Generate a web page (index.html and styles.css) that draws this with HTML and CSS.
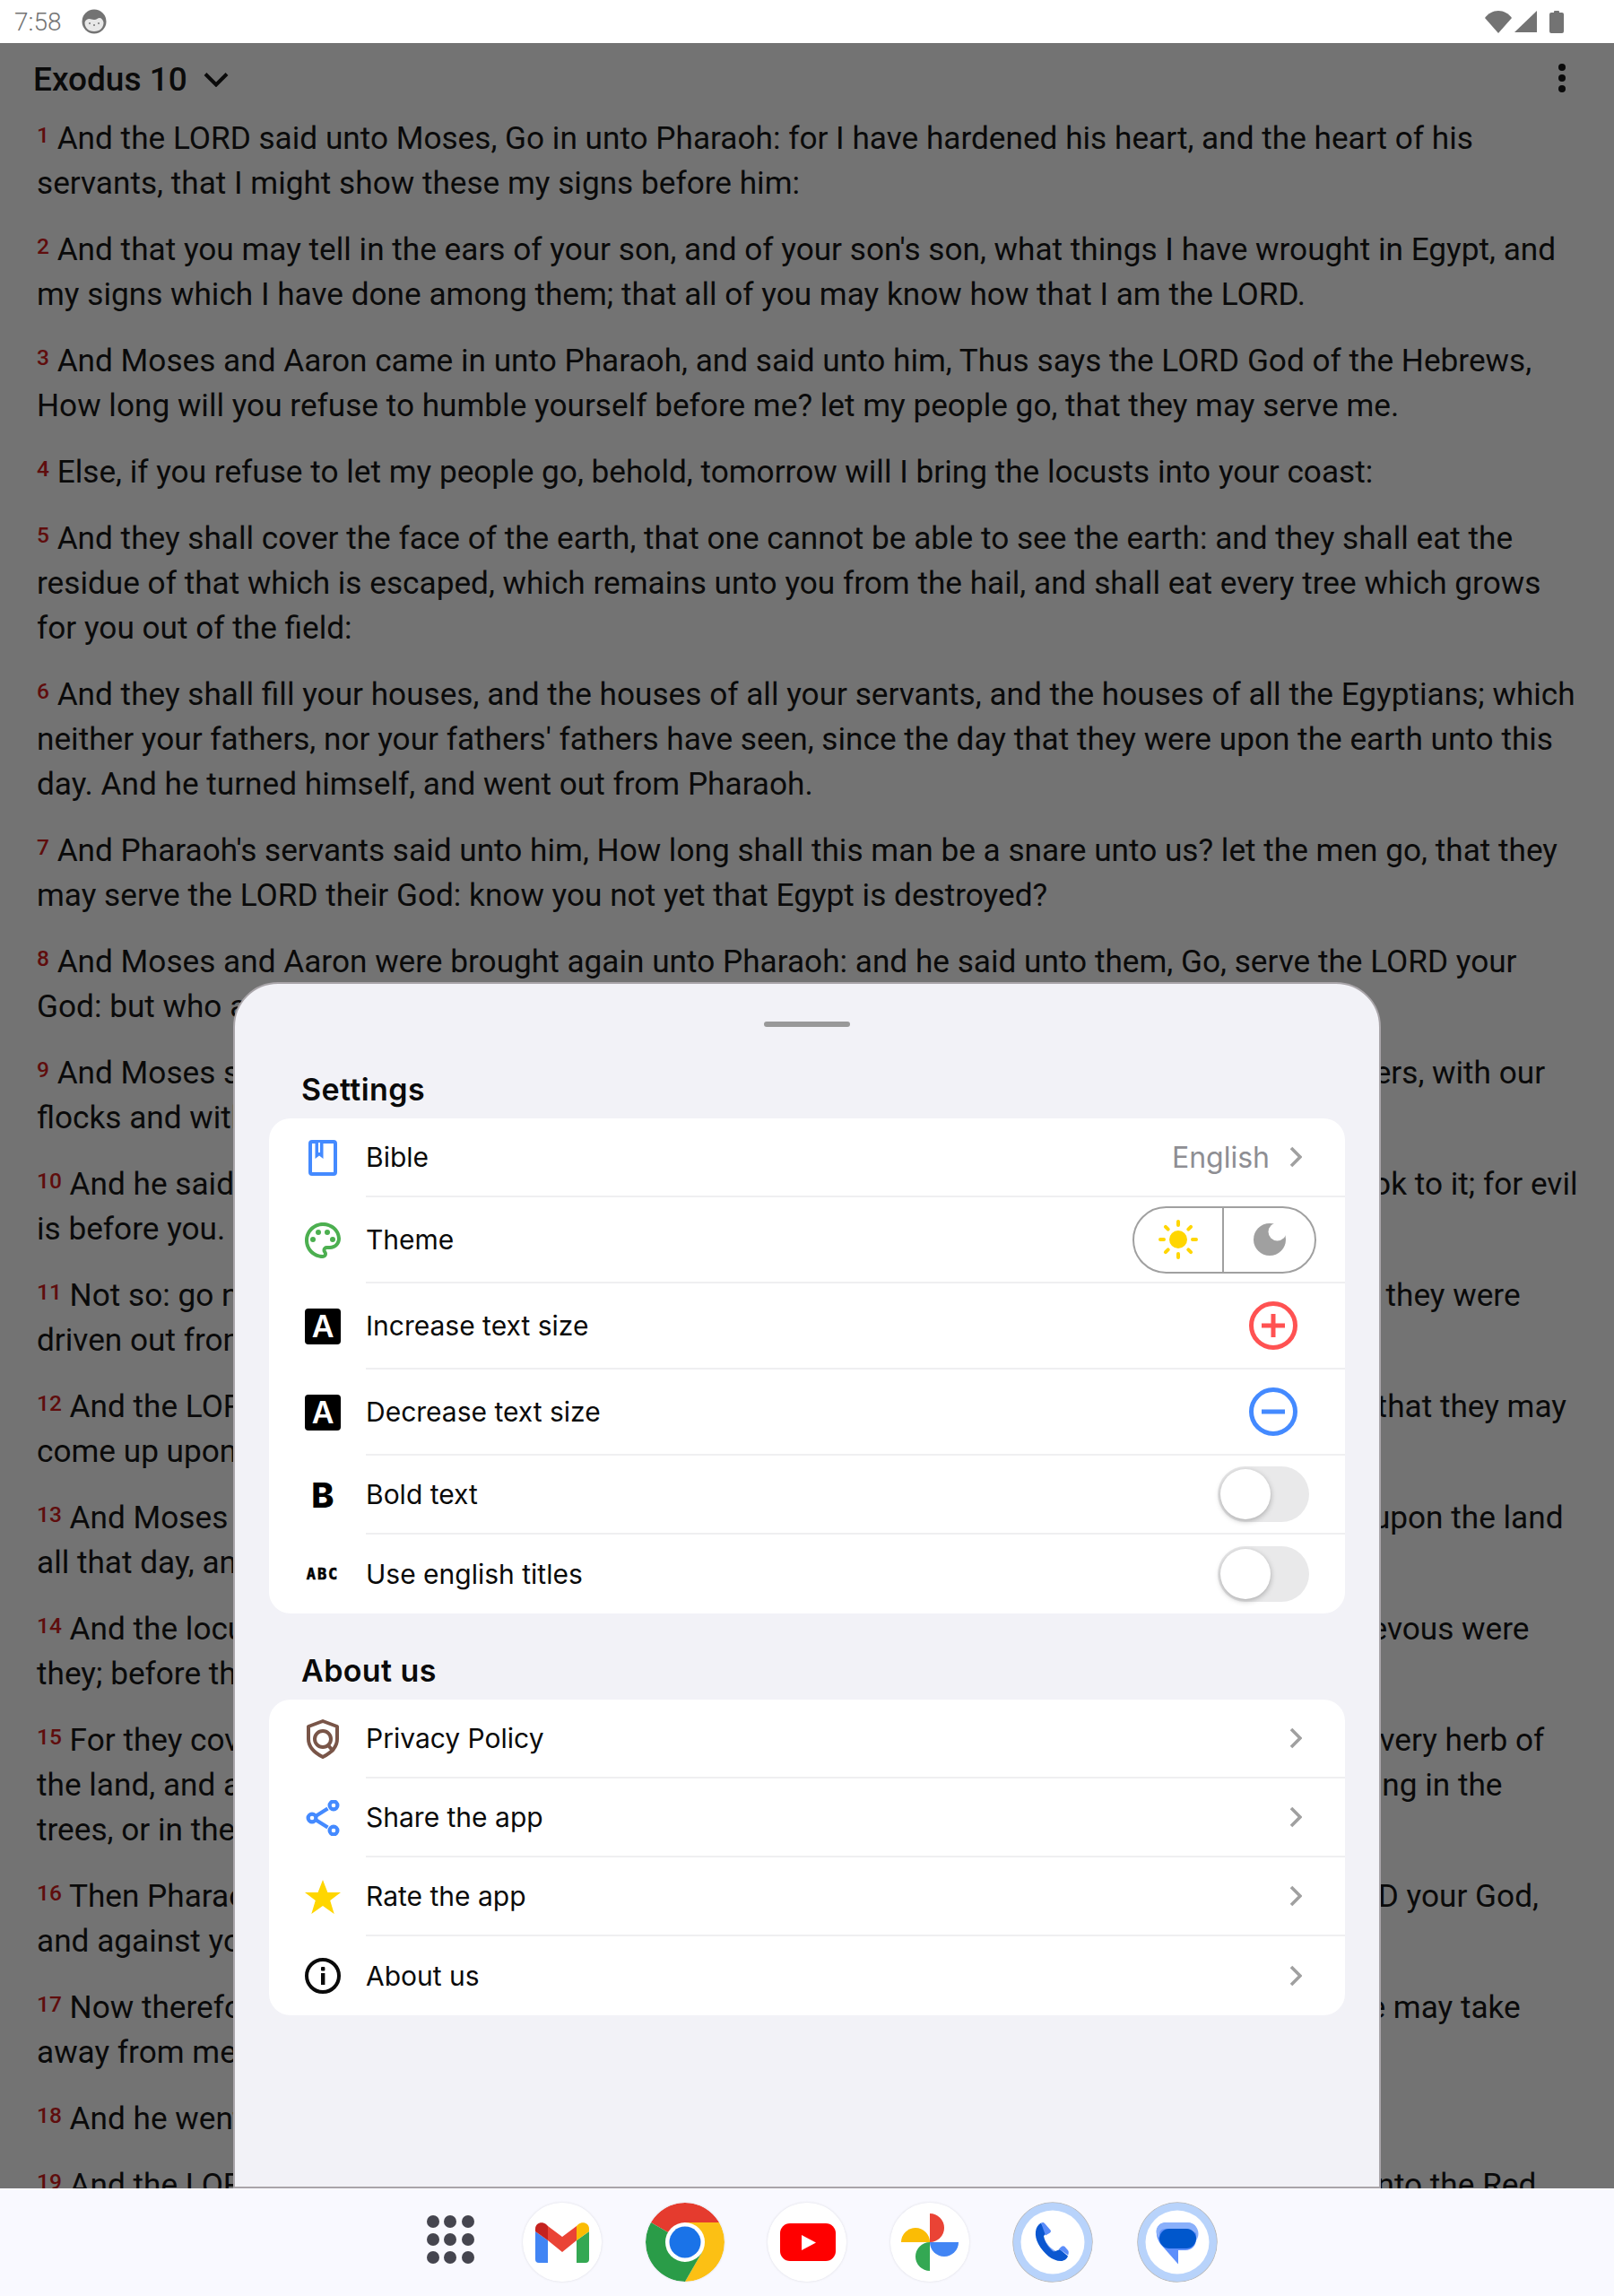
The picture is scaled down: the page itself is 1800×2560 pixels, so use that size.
FILE: index.html
```
<!DOCTYPE html>
<html lang="en">
<head>
<meta charset="utf-8">
<title>Exodus 10</title>
<link rel="stylesheet" href="styles.css">
</head>
<body>
<div class="screen">
  <header class="status">
    <div class="status-left">
      <span class="clock">7:58</span>
      <svg class="face" viewBox="0 0 28 28"><circle cx="14" cy="14" r="13.5" fill="#737373"/><path d="M3.5 15c1-3 3-4 5-4 2 0 3 1 5.500 1 3 0 4-2 6-2s4 2 4.500 5c0 6-4 10-10.500 10S3.500 21 3.500 15z" fill="#e8e8e8"/><circle cx="9" cy="16" r="1" fill="#777"/><circle cx="14" cy="18" r="1" fill="#777"/><circle cx="19" cy="16" r="1" fill="#777"/></svg>
    </div>
    <div class="status-right">
      <svg class="wifi" viewBox="0 0 30 25"><path d="M15 25 0 8C3.500 3 9 0 15 0s11.500 3 15 8z" fill="#737373"/></svg>
      <svg class="signal" viewBox="0 0 25 24"><path d="M25 0v24H0z" fill="#737373"/></svg>
      <svg class="battery" viewBox="0 0 16 26"><path d="M5 2a1 1 0 0 1 1-1h4a1 1 0 0 1 1 1v1h3a2 2 0 0 1 2 2v19a2 2 0 0 1-2 2H2a2 2 0 0 1-2-2V5a2 2 0 0 1 2-2h3z" fill="#737373"/></svg>
    </div>
  </header>

  <main class="reader">
    <div class="topbar">
      <div class="chapter">
        <span class="chapter-name">Exodus 10</span>
        <svg class="chapter-chevron" viewBox="0 0 28 17"><path d="M2 2.500 14 14.500 26 2.500" fill="none" stroke="#0a0a0a" stroke-width="4"/></svg>
      </div>
      <svg class="kebab" viewBox="0 0 10 34"><circle cx="5" cy="5" r="4"/><circle cx="5" cy="17" r="4"/><circle cx="5" cy="29" r="4"/></svg>
    </div>
    <div class="verses">
      <p class="verse"><span class="num">1</span> And the LORD said unto Moses, Go in unto Pharaoh: for I have hardened his heart, and the heart of his servants, that I might show these my signs before him:</p>
      <p class="verse"><span class="num">2</span> And that you may tell in the ears of your son, and of your son's son, what things I have wrought in Egypt, and my signs which I have done among them; that all of you may know how that I am the LORD.</p>
      <p class="verse"><span class="num">3</span> And Moses and Aaron came in unto Pharaoh, and said unto him, Thus says the LORD God of the Hebrews, How long will you refuse to humble yourself before me? let my people go, that they may serve me.</p>
      <p class="verse"><span class="num">4</span> Else, if you refuse to let my people go, behold, tomorrow will I bring the locusts into your coast:</p>
      <p class="verse"><span class="num">5</span> And they shall cover the face of the earth, that one cannot be able to see the earth: and they shall eat the residue of that which is escaped, which remains unto you from the hail, and shall eat every tree which grows for you out of the field:</p>
      <p class="verse"><span class="num">6</span> And they shall fill your houses, and the houses of all your servants, and the houses of all the Egyptians; which neither your fathers, nor your fathers' fathers have seen, since the day that they were upon the earth unto this day. And he turned himself, and went out from Pharaoh.</p>
      <p class="verse"><span class="num">7</span> And Pharaoh's servants said unto him, How long shall this man be a snare unto us? let the men go, that they may serve the LORD their God: know you not yet that Egypt is destroyed?</p>
      <p class="verse"><span class="num">8</span> And Moses and Aaron were brought again unto Pharaoh: and he said unto them, Go, serve the LORD your God: but who are they that shall go?</p>
      <p class="verse"><span class="num">9</span> And Moses said, We will go with our young and with our old, with our sons and with our daughters, with our flocks and with our herds will we go; for we must hold a feast unto the LORD.</p>
      <p class="verse"><span class="num">10</span> And he said unto them, Let the LORD be so with you, as I will let you go, and your little ones: look to it; for evil is before you.</p>
      <p class="verse"><span class="num">11</span> Not so: go now you that are men, and serve the LORD; for that is now what you did desire. And they were driven out from Pharaoh's presence.</p>
      <p class="verse"><span class="num">12</span> And the LORD said unto Moses, Stretch out your hand above the land of Egypt for the locusts, that they may come up upon the land of Egypt, and eat every herb of the land, even all that the hail has left.</p>
      <p class="verse"><span class="num">13</span> And Moses stretched forth his rod over the land of Egypt, and the LORD brought an east wind upon the land all that day, and all that night; and when it was morning, the east wind brought the locusts.</p>
      <p class="verse"><span class="num">14</span> And the locusts went up over all the land of Egypt, and rests in all the coasts of Egypt: very grievous were they; before them there were no such locusts as they, neither after them shall be such.</p>
      <p class="verse"><span class="num">15</span> For they covered the face of the whole earth, so that the land was darkened; and they did eat every herb of the land, and all the fruit of the trees which the hail had left: and there remained not any green thing in the trees, or in the herbs of the field, through all the land of Egypt.</p>
      <p class="verse"><span class="num">16</span> Then Pharaoh called for Moses and Aaron in haste; and he said, I have sinned against the LORD your God, and against you.</p>
      <p class="verse"><span class="num">17</span> Now therefore forgive, I pray you, my sin only this once, and entreat the LORD your God, that he may take away from me this death only.</p>
      <p class="verse"><span class="num">18</span> And he went out from Pharaoh, and entreated the LORD.</p>
      <p class="verse"><span class="num">19</span> And the LORD turned a mighty strong west wind, which took away the locusts, and cast them into the Red sea; there remained not one locust in all the coasts of Egypt.</p>
    </div>

    <section class="sheet">
      <div class="handle"></div>
      <h2 class="sheet-title">Settings</h2>
      <div class="card">
        <div class="row">
          <span class="row-icon"><svg class="ico" viewBox="0 0 40 40"><rect x="6" y="2" width="28" height="36" rx="2" fill="none" stroke="#448aff" stroke-width="4"/><path d="M11.500 3v18l4.500-3.500 4.500 3.500V3z" fill="#448aff"/><path d="M15 3h2v11h-2z" fill="#fff"/></svg></span>
          <div class="row-body"><span class="label">Bible</span><span class="row-end"><span class="value">English</span><svg class="chev" viewBox="0 0 14 24"><path d="M2 2l10 10L2 22" fill="none" stroke="#a0a0a0" stroke-width="3.600"/></svg></span></div>
        </div>
        <div class="row row-tall">
          <span class="row-icon"><svg class="ico" viewBox="2 2 20 20"><path fill="#4caf50" d="M12 22C6.490 22 2 17.510 2 12S6.490 2 12 2s10 4.040 10 9c0 3.310-2.690 6-6 6h-1.770c-.28 0-.5.22-.5.5 0 .12.05.23.13.33.41.47.64 1.060.64 1.670A2.500 2.500 0 0 1 12 22zm0-18c-4.410 0-8 3.590-8 8s3.590 8 8 8c.28 0 .5-.22.5-.5a.54.54 0 0 0-.14-.35c-.41-.46-.63-1.050-.63-1.650a2.500 2.500 0 0 1 2.500-2.500H16c2.210 0 4-1.790 4-4 0-3.860-3.590-7-8-7z"/><circle cx="6.500" cy="11.500" r="1.500" fill="#4caf50"/><circle cx="9.500" cy="7.500" r="1.500" fill="#4caf50"/><circle cx="14.500" cy="7.500" r="1.500" fill="#4caf50"/><circle cx="17.500" cy="11.500" r="1.500" fill="#4caf50"/></svg></span>
          <div class="row-body"><span class="label">Theme</span>
            <div class="segment">
              <span class="seg seg-left"><svg class="sun" viewBox="0 0 44 44"><circle cx="22" cy="22" r="10" fill="#ffd600"/><g stroke="#ffd600" stroke-width="4" stroke-linecap="round"><path d="M22 2v4M22 38v4M2 22h4M38 22h4M7.900 7.900l2.800 2.800M33.300 33.300l2.800 2.800M7.900 36.100l2.800-2.800M33.300 10.700l2.800-2.800"/></g></svg></span>
              <span class="seg"><svg class="moon" viewBox="0 0 36 36"><circle cx="18" cy="18" r="18" fill="#a0a0a0"/><circle cx="26.500" cy="9.500" r="10" fill="#fff"/></svg></span>
            </div>
          </div>
        </div>
        <div class="row row-tall">
          <span class="row-icon"><span class="a-box">A</span></span>
          <div class="row-body"><span class="label">Increase text size</span><svg class="round-btn" viewBox="0 0 54 54"><circle cx="27" cy="27" r="24.500" fill="none" stroke="#ff5252" stroke-width="5"/><path d="M14 27h26M27 14v26" stroke="#ff5252" stroke-width="5"/></svg></div>
        </div>
        <div class="row row-tall">
          <span class="row-icon"><span class="a-box">A</span></span>
          <div class="row-body"><span class="label">Decrease text size</span><svg class="round-btn" viewBox="0 0 54 54"><circle cx="27" cy="27" r="24.500" fill="none" stroke="#448aff" stroke-width="5"/><path d="M14 27h26" stroke="#448aff" stroke-width="5"/></svg></div>
        </div>
        <div class="row">
          <span class="row-icon"><span class="b-mark">B</span></span>
          <div class="row-body"><span class="label">Bold text</span><span class="toggle"><span class="thumb"></span></span></div>
        </div>
        <div class="row row-last">
          <span class="row-icon"><span class="abc-mark">ABC</span></span>
          <div class="row-body"><span class="label">Use english titles</span><span class="toggle"><span class="thumb"></span></span></div>
        </div>
      </div>

      <h2 class="sheet-title sheet-title-second">About us</h2>
      <div class="card">
        <div class="row">
          <span class="row-icon"><svg class="ico-tall" viewBox="0 0 36 44"><path d="M18 2 34 8v14c0 9-7 15.500-16 20C9 37.500 2 31 2 22V8z" fill="none" stroke="#795548" stroke-width="4" stroke-linejoin="round"/><circle cx="18" cy="22" r="9" fill="none" stroke="#795548" stroke-width="4"/><path d="M24 29l6 7" stroke="#795548" stroke-width="4"/></svg></span>
          <div class="row-body"><span class="label">Privacy Policy</span><svg class="chev" viewBox="0 0 14 24"><path d="M2 2l10 10L2 22" fill="none" stroke="#a0a0a0" stroke-width="3.600"/></svg></div>
        </div>
        <div class="row">
          <span class="row-icon"><svg class="ico" viewBox="0 0 40 40"><g fill="none" stroke="#448aff" stroke-width="4.200"><path d="M12 18 25.500 9.500M12 22l13.500 8.500"/><circle cx="8" cy="20" r="4.400"/><circle cx="32" cy="6" r="4.400"/><circle cx="32" cy="34" r="4.400"/></g></svg></span>
          <div class="row-body"><span class="label">Share the app</span><svg class="chev" viewBox="0 0 14 24"><path d="M2 2l10 10L2 22" fill="none" stroke="#a0a0a0" stroke-width="3.600"/></svg></div>
        </div>
        <div class="row">
          <span class="row-icon"><svg class="ico" viewBox="0 0 40 40"><path d="M20 1l5.400 14H40l-11.800 9 4.500 15L20 30l-12.700 9 4.500-15L0 15h14.600z" fill="#ffd600"/></svg></span>
          <div class="row-body"><span class="label">Rate the app</span><svg class="chev" viewBox="0 0 14 24"><path d="M2 2l10 10L2 22" fill="none" stroke="#a0a0a0" stroke-width="3.600"/></svg></div>
        </div>
        <div class="row row-last">
          <span class="row-icon"><svg class="ico" viewBox="0 0 40 40"><circle cx="20" cy="20" r="18" fill="none" stroke="#0a0a0a" stroke-width="4"/><rect x="18" y="17" width="4.400" height="13" fill="#0a0a0a"/><rect x="18" y="10" width="4.400" height="4.400" rx="1" fill="#0a0a0a"/></svg></span>
          <div class="row-body"><span class="label">About us</span><svg class="chev" viewBox="0 0 14 24"><path d="M2 2l10 10L2 22" fill="none" stroke="#a0a0a0" stroke-width="3.600"/></svg></div>
        </div>
      </div>
    </section>
  </main>

  <footer class="dock">
    <span class="apps"><i></i><i></i><i></i><i></i><i></i><i></i><i></i><i></i><i></i></span>
    <svg class="dock-app" viewBox="0 0 88 88"><circle cx="44" cy="44" r="44" fill="#fff"/><path d="M14 32 28 42v25H18a4 4 0 0 1-4-4z" fill="#4285f4"/><path d="M60 42 74 32v31a4 4 0 0 1-4 4H60z" fill="#34a853"/><path d="M28 42V26L44 38 60 26V42L44 55z" fill="#ea4335"/><path d="M14 32v-3c0-6 7-9 12-5l2 2v16z" fill="#c5221f"/><path d="M60 42V26l2-2c5-4 12-1 12 5v3z" fill="#fbbc04"/></svg>
    <svg class="dock-app dock-flat" viewBox="0 0 88 88"><path d="M5.900 22A44 44 0 0 1 82.100 22H44V44z" fill="#e53b2e"/><path d="M82.100 22A44 44 0 0 1 44 88L63 55 44 44V22z" fill="#fcc014"/><path d="M44 88A44 44 0 0 1 5.900 22L44 44 63 55z" fill="#2a9c48"/><circle cx="44" cy="44" r="22" fill="#fff"/><circle cx="44" cy="44" r="17.500" fill="#1a73e8"/></svg>
    <svg class="dock-app" viewBox="0 0 88 88"><circle cx="44" cy="44" r="44" fill="#fff"/><rect x="14" y="23" width="62" height="42" rx="11" fill="#f00"/><path d="M38 36 54 44.500 38 53z" fill="#fff"/></svg>
    <svg class="dock-app" viewBox="0 0 88 88"><circle cx="44" cy="44" r="44" fill="#fff"/><path d="M44 12A16 16 0 0 1 44 44z" fill="#ea4335"/><path d="M44 44H76A16 16 0 0 1 44 44z" fill="#4285f4"/><path d="M44 44V76A16 16 0 0 1 44 44z" fill="#34a853"/><path d="M44 44H12A16 16 0 0 1 44 44z" fill="#fbbc04"/></svg>
    <svg class="dock-app dock-ring" viewBox="0 0 90 90"><circle cx="45" cy="45" r="44.800" fill="#b9b9b9"/><circle cx="45" cy="45" r="44" fill="#b8d3fb"/><circle cx="45" cy="45" r="35.500" fill="#fff"/><path d="M32 23.500C25 27 24 38 29 47c6 11 16 19 25 19 4 0 7-2.500 8-5.500L53 53l-5 2c-6-3-12-10-13-17l3-3z" fill="#0b57d0"/><path d="M32 23.500c2-1 3.500-.5 4.500 1l6 7c.8 1 .5 2.500-.8 3.300L37 37.500z" fill="#5b8dfa"/><path d="M35 38c1 7 7 14 13 17l-2 .5C41 52 36 45 35 38z" fill="#7fa5fb"/><path d="M52 52.500l3-2.700c1-.9 2.400-.8 3.300 0l3.700 4.200c1 1.100 1 3 .2 5.500z" fill="#5b8dfa"/></svg>
    <svg class="dock-app dock-ring" viewBox="0 0 90 90"><circle cx="45" cy="45" r="44.800" fill="#b9b9b9"/><circle cx="45" cy="45" r="44" fill="#b8d3fb"/><circle cx="45" cy="45" r="35.500" fill="#fff"/><path d="M33 23h23c7 0 12.500 6 12.500 12.500S63 48 56 51v-3z" fill="#8ab0fb"/><path d="M21.700 33c0-6 5-10 11-10h12L66 35v6c0 8-5 13-12 13h-8v15.500L28 49c-4-4-6.300-10-6.300-16z" fill="#5e8ffb"/><path d="M21.700 33c0-6 5-10 11-10h23c6 0 10 3 11 7H33c-6 0-8 3-8 6 0 2 .5 4 1 5-3-2-4.300-5-4.300-8z" fill="#8ab0fb"/><rect x="25" y="30" width="41" height="22" rx="11" fill="#0057cc"/></svg>
  </footer>
</div>
</body>
</html>
```
FILE: styles.css
```
* { box-sizing: border-box; }
html, body { margin: 0; padding: 0; }
body { font-family: Roboto, "Liberation Sans", sans-serif; color: #0a0a0a; }
.screen { width: 1800px; height: 2560px; display: flex; flex-direction: column; overflow: hidden; background: #737373; }

.status { height: 48px; flex: none; background: #fff; display: flex; align-items: center; justify-content: space-between; padding: 0 56px 0 16px; }
.status-left { display: flex; align-items: center; gap: 23px; }
.clock { font-size: 28px; font-weight: 300; color: #737373; }
.face { width: 28px; height: 28px; display: block; }
.status-right { display: flex; align-items: center; }
.wifi { width: 30px; height: 25px; margin-right: 3px; display: block; }
.signal { width: 25px; height: 24px; margin-right: 14px; display: block; }
.battery { width: 16px; height: 26px; display: block; }

.reader { flex: 1; position: relative; overflow: hidden; min-height: 0; }
.topbar { height: 81px; padding: 0 53px 0 37px; display: flex; align-items: center; justify-content: space-between; }
.chapter { display: flex; align-items: center; gap: 18px; }
.chapter-name { font-size: 37px; font-weight: 500; }
.chapter-chevron { width: 28px; height: 17px; display: block; }
.kebab { width: 10px; height: 34px; fill: #0a0a0a; display: block; margin-bottom: 3px; }

.verses { padding: 0 40px 0 41px; }
.verse { margin: 0 0 24px; font-size: 35.200px; line-height: 50px; }
.num { font-size: 24.500px; font-weight: 500; color: #5f0d0d; vertical-align: 7px; line-height: 0; }

.sheet { position: absolute; left: 260px; right: 260px; top: 1047px; bottom: 0; background: #f2f2f7; border: 2px solid #a9a5a9; border-radius: 50px 50px 0 0; padding: 0 38px; }
.handle { width: 96px; height: 6px; background: #999; border-radius: 3px; margin: 42px auto 0; }
.sheet-title { margin: 49px 0 0 36px; height: 53px; font-family: Inter, Roboto, sans-serif; font-size: 34px; line-height: 42px; font-weight: 600; letter-spacing: .4px; }
.sheet-title-second { margin-top: 43px; height: 53px; }

.card { background: #fff; border-radius: 24px; overflow: hidden; }
.row { height: 88px; display: flex; align-items: stretch; padding-left: 40px; }
.row-tall { height: 96px; }
.row-icon { width: 40px; flex: none; margin-right: 28px; display: flex; align-items: center; justify-content: center; }
.row-body { flex: 1; min-width: 0; display: flex; align-items: center; justify-content: space-between; border-bottom: 2px solid #efeff1; padding-right: 40px; }
.row-last .row-body { border-bottom: 0; }
.label { font-family: Inter, Roboto, sans-serif; font-size: 30px; }
.row-end { display: flex; align-items: center; }
.value { font-family: Inter, Roboto, sans-serif; font-size: 32px; color: #8e8e93; margin-right: 22px; }
.chev { width: 14px; height: 24px; margin-right: 8px; display: block; flex: none; }
.ico { width: 40px; height: 40px; display: block; }
.ico-tall { width: 36px; height: 44px; display: block; }

.a-box { width: 40px; height: 40px; background: #000; color: #fff; border-radius: 4px; font-size: 34px; font-weight: 600; line-height: 40px; text-align: center; display: block; font-family: Inter, Roboto, sans-serif; }
.b-mark { font-family: Inter, Roboto, sans-serif; font-size: 38px; font-weight: 800; color: #000; line-height: 40px; }
.abc-mark { font-family: "DejaVu Sans Mono", monospace; font-size: 17px; font-weight: 700; color: #000; letter-spacing: 2px; line-height: 20px; -webkit-text-stroke: .6px #000; }

.segment { width: 205px; height: 75px; border: 2.500px solid #a0a0a0; border-radius: 38px; display: flex; margin-right: -8px; }
.seg { flex: 1; display: flex; align-items: center; justify-content: center; }
.seg-left { flex: none; width: 100px; border-right: 2.500px solid #a0a0a0; }
.sun { width: 44px; height: 44px; display: block; }
.moon { width: 36px; height: 36px; display: block; }

.round-btn { width: 54px; height: 54px; margin-right: 13px; display: block; flex: none; }

.toggle { width: 102px; height: 62px; background: #e9e9ea; border-radius: 31px; padding: 3px; display: block; flex: none; }
.thumb { width: 56px; height: 56px; background: #fff; border-radius: 50%; display: block; box-shadow: 0 2px 6px rgba(0,0,0,.28); }

.dock { height: 120px; flex: none; background: #f9f9ff; display: flex; align-items: center; padding-left: 458px; gap: 48.500px; position: relative; }
.apps { width: 88px; height: 60px; margin-right: -11.500px; display: grid; grid-template-columns: repeat(3, 14px); grid-auto-rows: 14px; justify-content: center; column-gap: 5.500px; row-gap: 6px; }
.apps i { display: block; background: #45454f; border-radius: 50%; }
.dock-app { width: 88px; height: 88px; display: block; flex: none; border-radius: 50%; box-shadow: 0 0 3px rgba(0,0,0,.12); }
.dock-flat { box-shadow: 0 0 2px rgba(0,0,0,.15); }
.dock-ring { width: 90px; height: 90px; box-shadow: none; }
```
